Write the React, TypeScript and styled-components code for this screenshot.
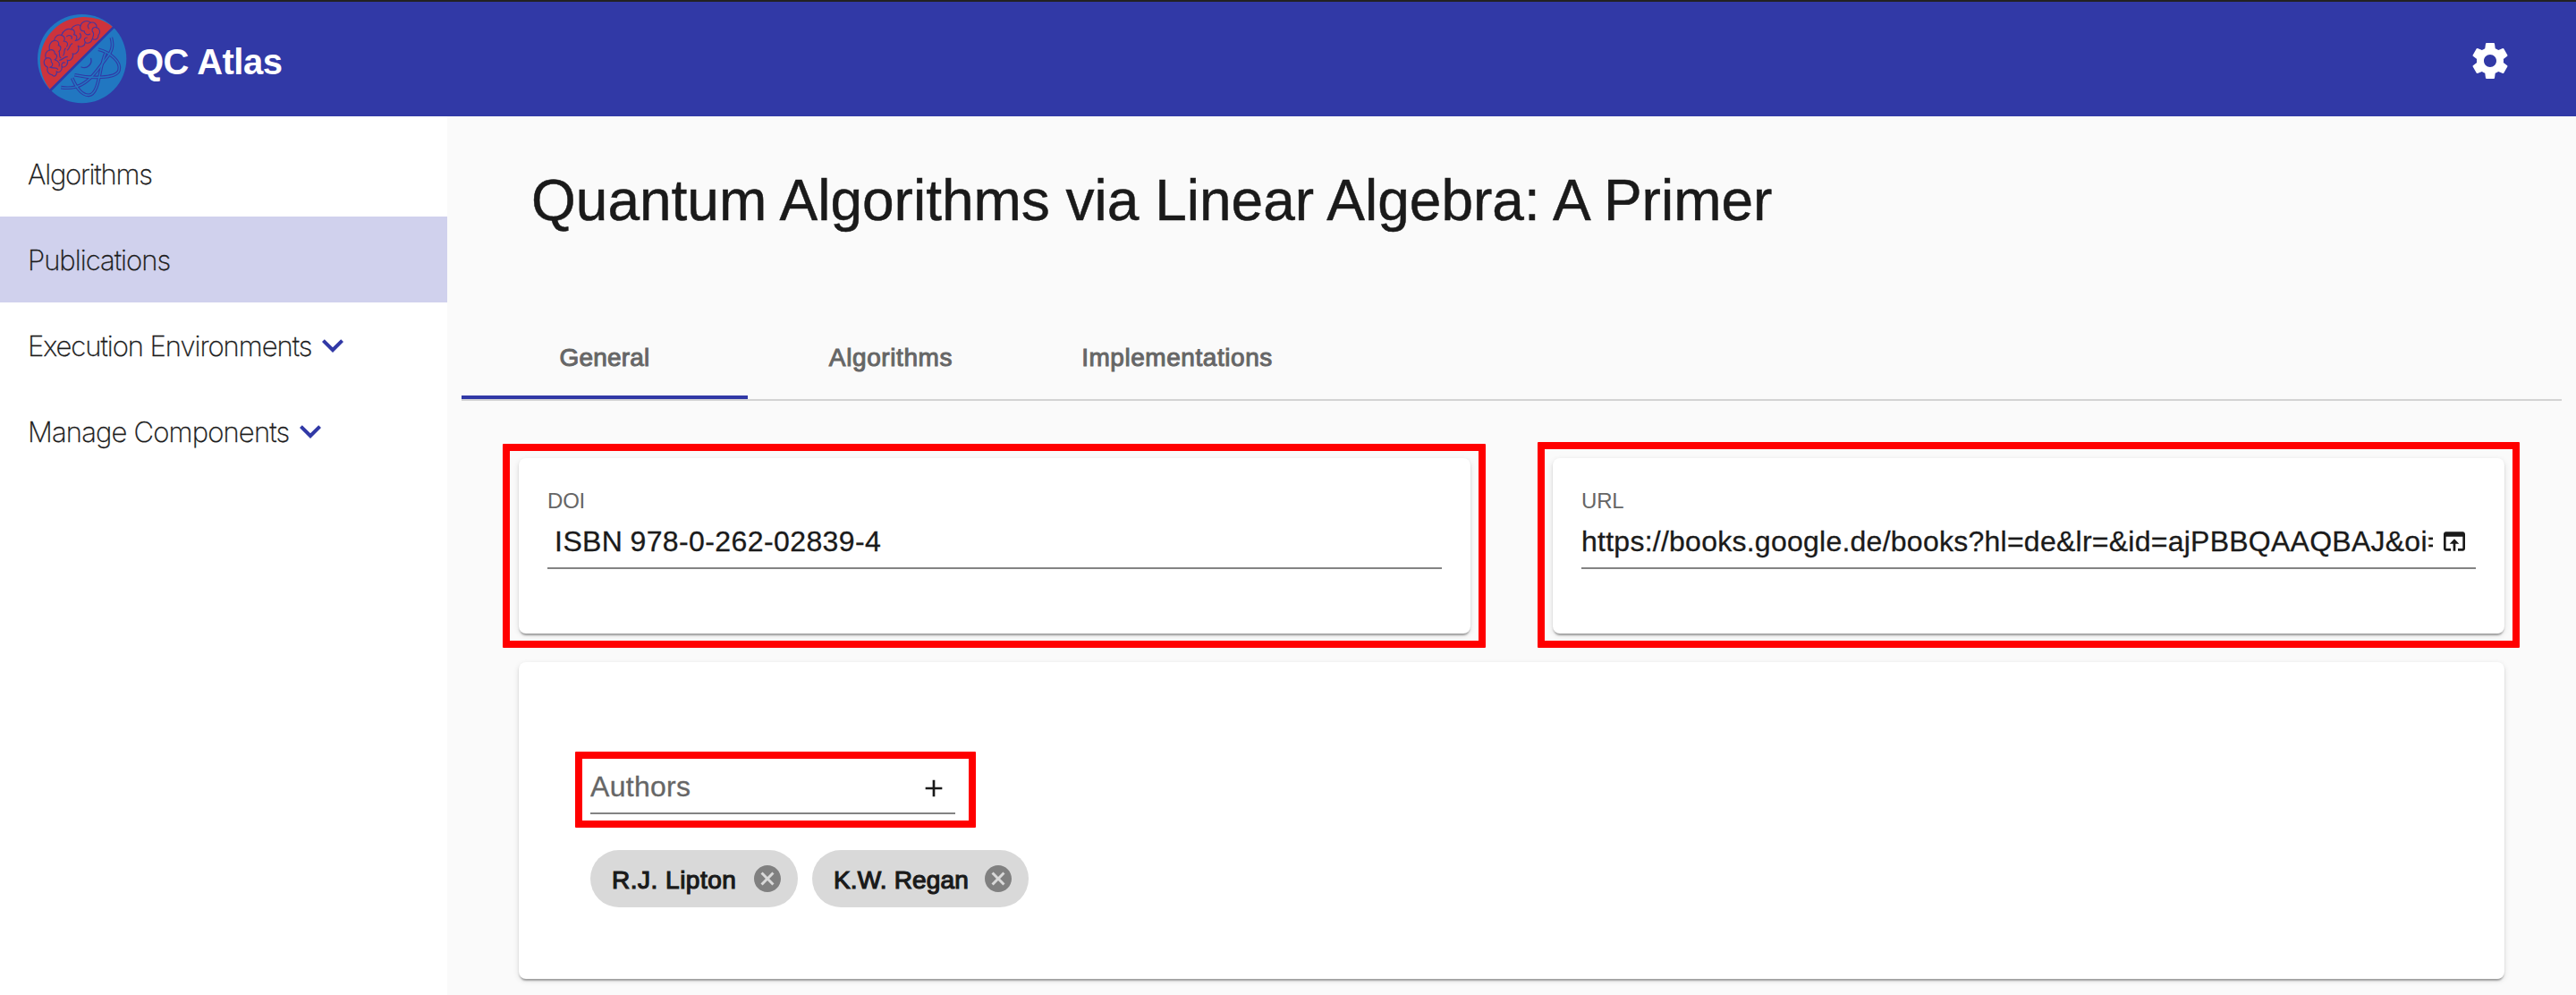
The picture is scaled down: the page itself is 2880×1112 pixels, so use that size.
import React from "react";
import styled, { createGlobalStyle } from "styled-components";

const PRIMARY = "#3139a6";
const SANS = '"Liberation Sans", Arial, sans-serif';

const GlobalStyle = createGlobalStyle`
  * { box-sizing: border-box; }
  body {
    margin: 0;
    background: #fafafa;
    color: #1a1a1a;
    font-family: ${SANS};
    -webkit-font-smoothing: antialiased;
  }
`;

const Page = styled.div`
  display: flex;
  flex-direction: column;
  width: 2880px;
  height: 1112px;
  overflow: hidden;
`;

const Toolbar = styled.header`
  display: flex;
  align-items: center;
  flex: none;
  height: 130px;
  padding: 0 72px 0 36px;
  border-top: 2px solid #222;
  background: ${PRIMARY};
  color: #fff;
`;

const Brand = styled.span`
  flex: 1;
  margin: 5px 0 0 4px;
  font-size: 40px;
  font-weight: 700;
  line-height: 48px;
  letter-spacing: -0.5px;
`;

const Body = styled.div`
  display: flex;
  flex: 1;
  min-height: 0;
`;

const Sidebar = styled.nav`
  flex: none;
  width: 500px;
  padding-top: 16px;
  background: #fff;
`;

const NavItem = styled.a<{ $active?: boolean }>`
  display: flex;
  align-items: center;
  height: 96px;
  padding-left: 31px;
  background: ${(p) => (p.$active ? "#d0d1ed" : "transparent")};
`;

const NavText = styled.span<{ $tracking: number }>`
  margin-top: 2px;
  font-family: Inter, sans-serif;
  font-size: 31px;
  font-weight: 200;
  line-height: 40px;
  letter-spacing: ${(p) => p.$tracking}px;
  -webkit-text-stroke: 0.3px #1a1a1a;
  white-space: nowrap;
`;

const Main = styled.main`
  flex: 1;
  min-width: 0;
  padding: 0 16px;
`;

const Title = styled.h1`
  margin: 0;
  padding: 58px 0 0 78px;
  height: 226px;
  font-size: 64px;
  font-weight: 400;
  line-height: 72px;
  -webkit-text-stroke: 0.5px #1a1a1a;
  white-space: nowrap;
`;

const TabBar = styled.div`
  display: flex;
  height: 92px;
  border-bottom: 2px solid #d3d3d3;
`;

const Tab = styled.div<{ $active?: boolean; $tracking: number }>`
  display: flex;
  align-items: center;
  justify-content: center;
  width: 320px;
  padding-top: 2px;
  border-bottom: 4px solid ${(p) => (p.$active ? PRIMARY : "transparent")};
  color: #666;
  font-size: 28px;
  line-height: 40px;
  letter-spacing: ${(p) => p.$tracking}px;
  -webkit-text-stroke: 1px #666;
`;

const Content = styled.div`
  display: flex;
  flex-direction: column;
  gap: 32px;
  padding: 64px 64px 0;
`;

const CardRow = styled.div`
  display: grid;
  grid-template-columns: 1064px 1064px;
  justify-content: space-between;
`;

const Card = styled.section<{ $height: number; $pad: string }>`
  position: relative;
  height: ${(p) => p.$height}px;
  padding: ${(p) => p.$pad};
  border-radius: 8px;
  background: #fff;
  box-shadow: 0 4px 2px -2px rgba(0, 0, 0, 0.2), 0 2px 2px rgba(0, 0, 0, 0.14),
    0 2px 6px rgba(0, 0, 0, 0.12);
`;

const Highlight = styled.div<{ $inset: string }>`
  position: absolute;
  inset: ${(p) => p.$inset};
  border: 8px solid #ff0000;
  border-radius: 1px;
  pointer-events: none;
`;

const FieldLabel = styled.div`
  padding-bottom: 2px;
  color: #666;
  font-size: 24px;
  line-height: 28px;
  letter-spacing: -0.2px;
`;

const FieldRow = styled.div`
  display: flex;
  align-items: center;
  height: 60px;
  border-bottom: 2px solid #838383;
`;

const FieldValue = styled.span<{ $tracking: number; $wordGap?: number; $muted?: boolean }>`
  flex: 1;
  min-width: 0;
  overflow: hidden;
  color: ${(p) => (p.$muted ? "#666" : "#1a1a1a")};
  font-size: 32px;
  line-height: 40px;
  letter-spacing: ${(p) => p.$tracking}px;
  word-spacing: ${(p) => p.$wordGap ?? 0}px;
  -webkit-text-stroke: 0.3px ${(p) => (p.$muted ? "#666" : "#1a1a1a")};
  white-space: pre;
`;

const IconSlot = styled.span<{ $drop?: number }>`
  display: flex;
  margin: ${(p) => p.$drop ?? 0}px 8px 0;
`;

const SettingsButton = styled.span`
  display: flex;
  margin-top: 4px;
`;

const AuthorField = styled.div`
  position: relative;
  width: 408px;
`;

const ChipList = styled.div`
  display: flex;
  gap: 16px;
  margin-top: 40px;
`;

const Chip = styled.div<{ $width: number }>`
  display: flex;
  align-items: center;
  justify-content: space-between;
  width: ${(p) => p.$width}px;
  height: 64px;
  padding: 0 16px 0 24px;
  border-radius: 32px;
  background: #d9d9d9;
  font-size: 28px;
  line-height: 36px;
`;

const ChipText = styled.span<{ $tracking: number }>`
  padding-top: 4px;
  letter-spacing: ${(p) => p.$tracking}px;
  -webkit-text-stroke: 1.2px #1a1a1a;
  white-space: nowrap;
`;

const Icon = ({ d, size, color = "#1a1a1a" }: { d: string; size: number; color?: string }) => (
  <svg width={size} height={size} viewBox="0 0 24 24" fill={color}>
    <path d={d} />
  </svg>
);

const GEAR =
  "M19.43 12.98c.04-.32.07-.64.07-.98s-.03-.66-.07-.98l2.11-1.65c.19-.15.24-.42.12-.64l-2-3.46c-.12-.22-.39-.3-.61-.22l-2.49 1c-.52-.4-1.08-.73-1.69-.98l-.38-2.65C14.46 2.18 14.25 2 14 2h-4c-.25 0-.46.18-.49.42l-.38 2.65c-.61.25-1.17.59-1.69.98l-2.49-1c-.23-.09-.49 0-.61.22l-2 3.46c-.13.22-.07.49.12.64l2.11 1.65c-.04.32-.07.65-.07.98s.03.66.07.98l-2.11 1.65c-.19.15-.24.42-.12.64l2 3.46c.12.22.39.3.61.22l2.49-1c.52.4 1.08.73 1.69.98l.38 2.65c.03.24.24.42.49.42h4c.25 0 .46-.18.49-.42l.38-2.65c.61-.25 1.17-.59 1.69-.98l2.49 1c.23.09.49 0 .61-.22l2-3.46c.12-.22.07-.49-.12-.64l-2.11-1.65zM12 15.5c-1.93 0-3.5-1.57-3.5-3.5s1.57-3.5 3.5-3.5 3.5 1.57 3.5 3.5-1.57 3.5-3.5 3.5z";
const CHEVRON = "M16.59 8.59L12 13.17 7.41 8.59 6 10l6 6 6-6z";
const OPEN =
  "M19 4H5c-1.11 0-2 .9-2 2v12c0 1.1.89 2 2 2h4v-2H5V8h14v10h-4v2h4c1.1 0 2-.9 2-2V6c0-1.1-.89-2-2-2zm-7 6l-4 4h3v6h2v-6h3l-4-4z";
const PLUS = "M19 13h-6v6h-2v-6H5v-2h6V5h2v6h6v2z";
const CANCEL =
  "M12 2C6.47 2 2 6.47 2 12s4.47 10 10 10 10-4.47 10-10S17.53 2 12 2zm5 13.59L15.59 17 12 13.41 8.41 17 7 15.59 10.59 12 7 8.41 8.41 7 12 10.59 15.59 7 17 8.41 13.41 12 17 15.59z";

const ORBITS = [
  "M265 96C273 125 268 142 248 166C225 196 198 238 165 254C142 266 116 266 97 263",
  "M222 136C262 146 300 178 291 206C281 236 190 232 142 221",
  "M134 232C150 268 168 290 190 289C226 286 224 196 246 148",
];

const FOLDS = [
  "M68 222C52 218 48 206 52 196C38 190 36 174 46 166C40 152 48 140 58 138C54 122 62 108 74 106C74 94 86 84 98 88C104 72 118 64 130 68C138 54 154 50 162 56C168 40 186 36 196 46C208 42 218 52 216 62C228 66 230 80 222 88C222 102 210 106 202 100C198 114 186 118 178 112C176 126 162 130 154 124",
  "M154 124C160 140 148 154 136 150C140 164 128 176 118 172C122 186 110 198 100 194C100 208 90 216 82 210C84 222 74 230 68 222",
  "M98 88C108 90 112 100 106 108C118 108 122 118 116 126M74 106C86 104 92 114 88 122C98 124 98 136 90 142",
  "M58 138C68 134 76 140 76 150C86 154 84 166 76 170M46 166C56 160 66 168 64 178C72 184 68 194 60 196",
  "M130 68C142 68 144 78 140 86C152 88 152 98 146 106C160 104 168 92 160 82",
  "M162 56C158 66 164 76 174 74C176 86 186 90 194 84M196 46C186 50 184 60 190 66M216 62C206 60 198 66 202 76C208 80 206 90 202 100",
  "M116 92C126 84 136 92 132 100M118 138C128 130 124 120 134 116M104 156C112 146 104 138 112 132M92 172C104 170 106 160 118 160",
  "M76 170C86 174 94 182 90 192M60 196C70 200 80 194 86 202M100 194C96 184 102 178 110 180M90 142C94 152 88 160 96 164M178 112C172 102 176 96 184 96",
];

const Logo = () => (
  <svg width={112} height={112} viewBox="0 0 336 336" fill="none" strokeLinecap="round">
    <circle cx={167} cy={167} r={149} fill="#2177c1" />
    <path d="M62 272A149 149 0 0 1 272 62Z" fill="#cd333c" />
    <path d="M58 276L276 58" stroke={PRIMARY} strokeWidth={8} />
    {FOLDS.map((d) => (
      <path key={d} d={d} stroke="#4b359a" strokeWidth={3.4} />
    ))}
    {ORBITS.map((d) => (
      <path key={d} d={d} stroke={PRIMARY} strokeWidth={11} strokeLinecap="butt" />
    ))}
    {ORBITS.map((d) => (
      <path key={d} d={d} stroke="#2177c1" strokeWidth={4.5} strokeLinecap="butt" />
    ))}
    <path d="M197 166A24 24 0 0 1 165 195" stroke={PRIMARY} strokeWidth={4} />
  </svg>
);

const NAV = [
  { label: "Algorithms", tracking: -1.2 },
  { label: "Publications", tracking: -0.97, active: true },
  { label: "Execution Environments", tracking: -1.03, expandable: true },
  { label: "Manage Components", tracking: -0.82, expandable: true },
];

const TABS = [
  { label: "General", tracking: 0.2, active: true },
  { label: "Algorithms", tracking: 0.6 },
  { label: "Implementations", tracking: 0.55 },
];

const AUTHORS = [
  { name: "R.J. Lipton", width: 232, tracking: 0.5 },
  { name: "K.W. Regan", width: 242, tracking: 0.15 },
];

export default function App() {
  return (
    <Page>
      <GlobalStyle />
      <Toolbar>
        <Logo />
        <Brand>QC Atlas</Brand>
        <SettingsButton>
          <Icon d={GEAR} size={48} color="#fff" />
        </SettingsButton>
      </Toolbar>
      <Body>
        <Sidebar>
          {NAV.map((item) => (
            <NavItem key={item.label} $active={item.active}>
              <NavText $tracking={item.tracking}>{item.label}</NavText>
              {item.expandable && <Icon d={CHEVRON} size={48} color={PRIMARY} />}
            </NavItem>
          ))}
        </Sidebar>
        <Main>
          <Title>Quantum Algorithms via Linear Algebra: A Primer</Title>
          <TabBar>
            {TABS.map((tab) => (
              <Tab key={tab.label} $active={tab.active} $tracking={tab.tracking}>
                {tab.label}
              </Tab>
            ))}
          </TabBar>
          <Content>
            <CardRow>
              <Card $height={196} $pad="34px 32px 0">
                <FieldLabel>DOI</FieldLabel>
                <FieldRow>
                  <FieldValue $tracking={0.4} $wordGap={-1.2}>
                    {" ISBN 978-0-262-02839-4"}
                  </FieldValue>
                </FieldRow>
                <Highlight $inset="-16px -17px -16px -18px" />
              </Card>
              <Card $height={196} $pad="34px 32px 0">
                <FieldLabel>URL</FieldLabel>
                <FieldRow>
                  <FieldValue $tracking={0.25}>
                    {"https://books.google.de/books?hl=de&lr=&id=ajPBBQAAQBAJ&oi="}
                  </FieldValue>
                  <IconSlot>
                    <Icon d={OPEN} size={32} />
                  </IconSlot>
                </FieldRow>
                <Highlight $inset="-18px -17px -16px -17px" />
              </Card>
            </CardRow>
            <Card $height={354} $pad="110px 80px 0">
              <AuthorField>
                <FieldRow>
                  <FieldValue $tracking={0.3} $muted>
                    Authors
                  </FieldValue>
                  <IconSlot $drop={4}>
                    <Icon d={PLUS} size={32} />
                  </IconSlot>
                </FieldRow>
                <Highlight $inset="-10px -23px -15px -17px" />
              </AuthorField>
              <ChipList>
                {AUTHORS.map((author) => (
                  <Chip key={author.name} $width={author.width}>
                    <ChipText $tracking={author.tracking}>{author.name}</ChipText>
                    <Icon d={CANCEL} size={36} color="#808080" />
                  </Chip>
                ))}
              </ChipList>
            </Card>
          </Content>
        </Main>
      </Body>
    </Page>
  );
}
